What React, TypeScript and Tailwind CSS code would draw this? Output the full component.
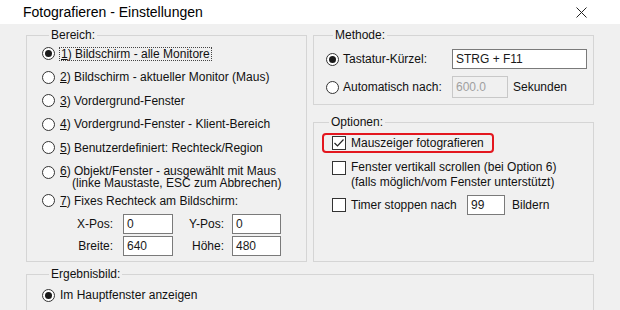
import React from "react";

function Radio({ checked = false }: { checked?: boolean }) {
  return (
    <span className="w-[13px] h-[13px] shrink-0 rounded-full border border-[#333] bg-white flex items-center justify-center">
      {checked && <span className="w-[7px] h-[7px] rounded-full bg-[#1a1a1a]" />}
    </span>
  );
}

function Check({ checked = false }: { checked?: boolean }) {
  return (
    <span className="w-[14px] h-[14px] shrink-0 border border-[#333] bg-white flex items-center justify-center">
      {checked && (
        <svg width="12" height="12" viewBox="0 0 12 12">
          <path d="M1.5 6 L4.5 9 L10.5 2.5" fill="none" stroke="#222" strokeWidth="1.2" />
        </svg>
      )}
    </span>
  );
}

// accelerator digit, underlined like in Windows dialogs
function Key({ k }: { k: string }) {
  return <span className="underline underline-offset-1">{k}</span>;
}

function Group({ title, className, children }: { title: string; className: string; children: React.ReactNode }) {
  return (
    <fieldset className={`border border-[#d5d5d5] ${className}`}>
      <legend className="ml-[7px] px-[2px] leading-[14px]">{title}</legend>
      {children}
    </fieldset>
  );
}

function RadioRow({ checked, children }: { checked?: boolean; children: React.ReactNode }) {
  return (
    <div className="flex items-center h-[23.5px]">
      <Radio checked={checked} />
      <span className="ml-[5px] whitespace-nowrap">{children}</span>
    </div>
  );
}

function TextBox({ value, className }: { value: string; className: string }) {
  return (
    <div className={`h-[20px] bg-white border border-[#7a7a7a] pl-[3px] flex items-center text-[#1a1a1a] ${className}`}>
      {value}
    </div>
  );
}

export default function App() {
  return (
    <div className="w-[620px] h-[310px] overflow-hidden bg-[#f0f0f0] font-['Liberation_Sans',Arial,sans-serif] text-[12px] text-[#111] flex flex-col">
      {/* Title bar */}
      <div className="h-[24px] shrink-0 bg-white flex items-center justify-between pl-[23px] pr-[33px]">
        <span className="text-[14px] text-black">Fotografieren - Einstellungen</span>
        <svg width="11" height="11" viewBox="0 0 11 11">
          <path d="M0.5 0.5 L10.5 10.5 M10.5 0.5 L0.5 10.5" stroke="#222" strokeWidth="1" />
        </svg>
      </div>

      <div className="pl-[26px] pt-[4px] flex flex-col gap-[5px]">
        <div className="flex gap-[6px]">
          {/* Bereich */}
          <Group title="Bereich:" className="w-[281px] h-[234px] pl-[15px]">
            <div className="flex items-center h-[23.5px]">
              <Radio checked />
              <span className="ml-[4px] border border-dotted border-[#444] px-[1px] leading-[12px] whitespace-nowrap">
                <Key k="1" />) Bildschirm - alle Monitore
              </span>
            </div>
            <RadioRow>
              <Key k="2" />) Bildschirm - aktueller Monitor (Maus)
            </RadioRow>
            <RadioRow>
              <Key k="3" />) Vordergrund-Fenster
            </RadioRow>
            <RadioRow>
              <Key k="4" />) Vordergrund-Fenster - Klient-Bereich
            </RadioRow>
            <RadioRow>
              <Key k="5" />) Benutzerdefiniert: Rechteck/Region
            </RadioRow>
            <div className="flex items-start h-[29.5px] pt-[5.5px]">
              <span className="mt-[0.5px]">
                <Radio />
              </span>
              <div className="ml-[5px] leading-[13px] whitespace-nowrap">
                <div>
                  <Key k="6" />) Objekt/Fenster - ausgewählt mit Maus
                </div>
                <div className="pl-[12px] -mt-[1px]">(linke Maustaste, ESC zum Abbrechen)</div>
              </div>
            </div>
            <RadioRow>
              <Key k="7" />) Fixes Rechteck am Bildschirm:
            </RadioRow>
            <div className="flex items-center h-[22px] pl-[30px]">
              <span className="w-[41px] text-right">X-Pos:</span>
              <TextBox value="0" className="ml-[10px] w-[50px]" />
              <span className="w-[51px] text-right">Y-Pos:</span>
              <TextBox value="0" className="ml-[8px] w-[49px]" />
            </div>
            <div className="flex items-center h-[22px] pl-[30px]">
              <span className="w-[41px] text-right">Breite:</span>
              <TextBox value="640" className="ml-[10px] w-[50px]" />
              <span className="w-[51px] text-right">Höhe:</span>
              <TextBox value="480" className="ml-[8px] w-[49px]" />
            </div>
          </Group>

          <div className="w-[281px] flex flex-col gap-[10px]">
            {/* Methode */}
            <Group title="Methode:" className="h-[77px] pl-[12px] pt-[6px] flex flex-col gap-[6px]">
              <div className="flex items-center h-[22px]">
                <Radio checked />
                <span className="ml-[4px] w-[107px] whitespace-nowrap">Tastatur-Kürzel:</span>
                <TextBox value="STRG + F11" className="ml-[2px] w-[135px]" />
              </div>
              <div className="flex items-center h-[22px]">
                <Radio />
                <span className="ml-[4px] w-[107px] whitespace-nowrap">Automatisch nach:</span>
                <div className="ml-[2px] w-[56px] h-[22px] bg-[#f0f0f0] border border-[#c8c8c8] pl-[3px] flex items-center text-[#a0a0a0]">
                  600.0
                </div>
                <span className="ml-[5px]">Sekunden</span>
              </div>
            </Group>

            {/* Optionen */}
            <Group title="Optionen:" className="h-[147px] pl-[8px]">
              <div className="mt-[4px] w-[172px] h-[20px] border-2 border-[#e3171f] rounded-[4px] pl-[8px] flex items-center">
                <Check checked />
                <span className="ml-[5px] whitespace-nowrap">Mauszeiger fotografieren</span>
              </div>
              <div className="mt-[6.5px] pl-[10px] flex items-start">
                <span className="mt-[1px]">
                  <Check />
                </span>
                <div className="ml-[5px] leading-[15px] whitespace-nowrap">
                  <div>Fenster vertikall scrollen (bei Option 6)</div>
                  <div>(falls möglich/vom Fenster unterstützt)</div>
                </div>
              </div>
              <div className="mt-[5.5px] pl-[10px] h-[20px] flex items-center">
                <Check />
                <span className="ml-[5px] w-[116px] whitespace-nowrap">Timer stoppen nach</span>
                <TextBox value="99" className="w-[38px]" />
                <span className="ml-[7px]">Bildern</span>
              </div>
            </Group>
          </div>
        </div>

        {/* Ergebnisbild */}
        <Group title="Ergebnisbild:" className="w-[568px] h-[70px] pl-[15px] pt-[3px]">
          <div className="flex items-center h-[22px]">
            <Radio checked />
            <span className="ml-[5px]">Im Hauptfenster anzeigen</span>
          </div>
          <div className="flex items-center h-[20px]">
            <Radio />
          </div>
        </Group>
      </div>
    </div>
  );
}
